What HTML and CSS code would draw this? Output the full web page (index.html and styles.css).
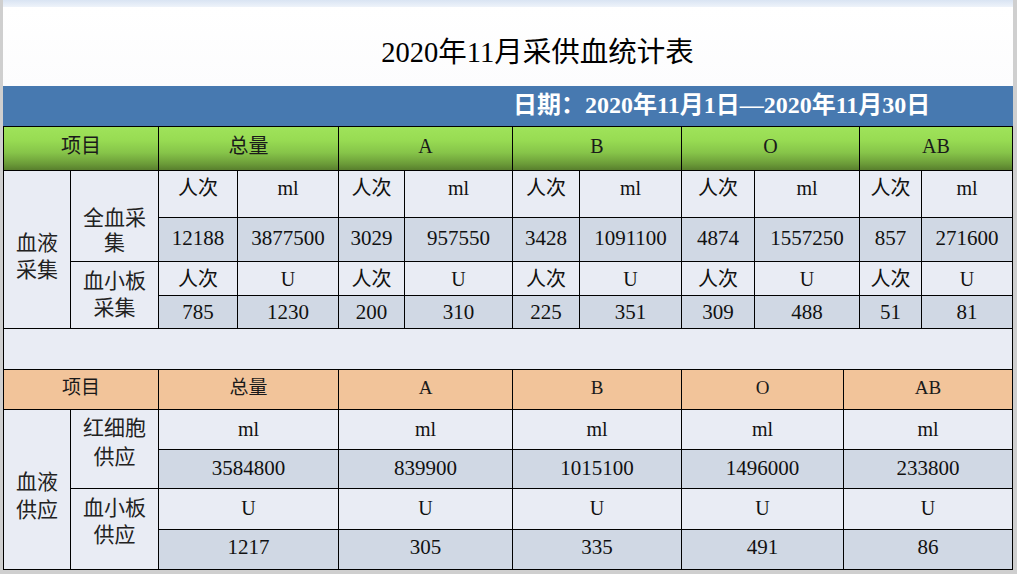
FILE: index.html
```html
<!DOCTYPE html>
<html lang="zh-CN">
<head>
<meta charset="utf-8">
<title>2020年11月采供血统计表</title>
<link rel="stylesheet" href="styles.css">
</head>
<body>
<div class="sheet">
  <div class="topline"></div>
  <header class="title"><h1>2020年11月采供血统计表</h1></header>
  <div class="band">日期：2020年11月1日—2020年11月30日</div>

  <div class="grid grid-collect">
    <div class="cell hd-green span2">项目</div>
    <div class="cell hd-green span2">总量</div>
    <div class="cell hd-green span2">A</div>
    <div class="cell hd-green span2">B</div>
    <div class="cell hd-green span2">O</div>
    <div class="cell hd-green span2">AB</div>

    <div class="cell lbl lbl-main rows4">血液<br>采集</div>
    <div class="cell lbl lbl-whole rows2">全血采<br>集</div>
    <div class="cell unit top">人次</div><div class="cell unit top">ml</div>
    <div class="cell unit top">人次</div><div class="cell unit top">ml</div>
    <div class="cell unit top">人次</div><div class="cell unit top">ml</div>
    <div class="cell unit top">人次</div><div class="cell unit top">ml</div>
    <div class="cell unit top">人次</div><div class="cell unit top">ml</div>

    <div class="cell val up">12188</div><div class="cell val up">3877500</div>
    <div class="cell val up">3029</div><div class="cell val up">957550</div>
    <div class="cell val up">3428</div><div class="cell val up">1091100</div>
    <div class="cell val up">4874</div><div class="cell val up">1557250</div>
    <div class="cell val up">857</div><div class="cell val up">271600</div>

    <div class="cell lbl lbl-plt rows2">血小板<br>采集</div>
    <div class="cell unit">人次</div><div class="cell unit">U</div>
    <div class="cell unit">人次</div><div class="cell unit">U</div>
    <div class="cell unit">人次</div><div class="cell unit">U</div>
    <div class="cell unit">人次</div><div class="cell unit">U</div>
    <div class="cell unit">人次</div><div class="cell unit">U</div>

    <div class="cell val">785</div><div class="cell val">1230</div>
    <div class="cell val">200</div><div class="cell val">310</div>
    <div class="cell val">225</div><div class="cell val">351</div>
    <div class="cell val">309</div><div class="cell val">488</div>
    <div class="cell val">51</div><div class="cell val">81</div>
  </div>

  <div class="spacer"></div>

  <div class="grid grid-supply">
    <div class="cell hd-orange span2">项目</div>
    <div class="cell hd-orange">总量</div>
    <div class="cell hd-orange">A</div>
    <div class="cell hd-orange">B</div>
    <div class="cell hd-orange">O</div>
    <div class="cell hd-orange">AB</div>

    <div class="cell lbl lbl-main2 rows4">血液<br>供应</div>
    <div class="cell lbl lbl-rbc rows2">红细胞<br>供应</div>
    <div class="cell unit s-up">ml</div><div class="cell unit s-up">ml</div><div class="cell unit s-up">ml</div><div class="cell unit s-up">ml</div><div class="cell unit s-up">ml</div>
    <div class="cell val s-up">3584800</div><div class="cell val s-up">839900</div><div class="cell val s-up">1015100</div><div class="cell val s-up">1496000</div><div class="cell val s-up">233800</div>

    <div class="cell lbl lbl-plt2 rows2">血小板<br>供应</div>
    <div class="cell unit s-up">U</div><div class="cell unit s-up">U</div><div class="cell unit s-up">U</div><div class="cell unit s-up">U</div><div class="cell unit s-up">U</div>
    <div class="cell val s-up2">1217</div><div class="cell val s-up2">305</div><div class="cell val s-up2">335</div><div class="cell val s-up2">491</div><div class="cell val s-up2">86</div>
  </div>
</div>
</body>
</html>
```
FILE: styles.css
```css
html, body {
  margin: 0;
  padding: 0;
}
body {
  background: #cfcfcf;
  font-family: "Liberation Serif", "Noto Sans CJK SC", serif;
  color: #111;
  width: 1017px;
  height: 574px;
  overflow: hidden;
}
.sheet {
  margin-left: 3px;
  width: 1010px;
  background: #ffffff;
  display: flex;
  flex-direction: column;
}
.topline {
  height: 7px;
  background: linear-gradient(to bottom, #d9e4f3, #eef3fa);
}
.title {
  height: 79px;
  box-sizing: border-box;
  padding: 12px 0 0 59px;
  display: flex;
  align-items: center;
  justify-content: center;
  background: linear-gradient(to bottom, #ffffff, #fcfcfd);
}
.title h1 {
  margin: 0;
  font-size: 28.5px;
  font-weight: normal;
  line-height: 32px;
  color: #000;
}
.band {
  height: 40px;
  box-sizing: border-box;
  background: #4779b0;
  color: #ffffff;
  font-weight: bold;
  font-size: 24px;
  line-height: 38px;
  padding-left: 510px;
  white-space: nowrap;
}
.grid {
  display: grid;
  gap: 1px;
  padding: 1px;
  background: #000;
  width: 1010px;
  box-sizing: border-box;
}
.grid-collect {
  grid-template-columns: 66px 87px 78px 100px 65px 107px 66px 101px 72px 104px 61px 90px;
  grid-template-rows: 43px 46px 43px 33px 32px;
}
.grid-supply {
  grid-template-columns: 66px 87px 179px 173px 168px 161px 168px;
  grid-template-rows: 39px 39px 38px 40px 39px;
}
.spacer {
  height: 40px;
  box-sizing: border-box;
  background: #e9ecf4;
  border-left: 1px solid #000;
  border-right: 1px solid #000;
}
.cell {
  display: flex;
  align-items: center;
  justify-content: center;
  text-align: center;
  background: #e9ecf4;
  font-size: 20px;
  line-height: 26px;
  color: #111;
  box-sizing: border-box;
}
.span2 { grid-column: span 2; }
.rows2 { grid-row: span 2; }
.rows4 { grid-row: span 4; }

.hd-green {
  background: linear-gradient(to bottom, #9fe35a 0%, #98dc53 30%, #86c449 60%, #6c9d39 85%, #587f2d 100%);
  font-size: 20px;
  color: #1a1a1a;
  padding-bottom: 6px;
}
.hd-orange {
  background: #f2c49a;
  font-size: 19px;
  color: #1a1a1a;
  padding-bottom: 4px;
}
.unit { background: #e9ecf4; }
.top { align-items: flex-start; padding-top: 4px; }
.val {
  background: #d0d8e4;
  font-size: 21px;
}
.up { padding-bottom: 4px; }
.s-up { padding-bottom: 2px; }
.s-up2 { padding-bottom: 5px; }

.lbl {
  font-size: 21px;
  color: #222;
}
.lbl-main { line-height: 27px; padding-top: 14px; }
.lbl-whole { align-items: flex-end; line-height: 25px; padding-bottom: 5px; }
.lbl-plt { line-height: 27px; }
.lbl-main2 { line-height: 28px; padding-top: 12px; }
.lbl-rbc { line-height: 29px; padding-bottom: 12px; }
.lbl-plt2 { line-height: 27px; padding-bottom: 14px; }
```
